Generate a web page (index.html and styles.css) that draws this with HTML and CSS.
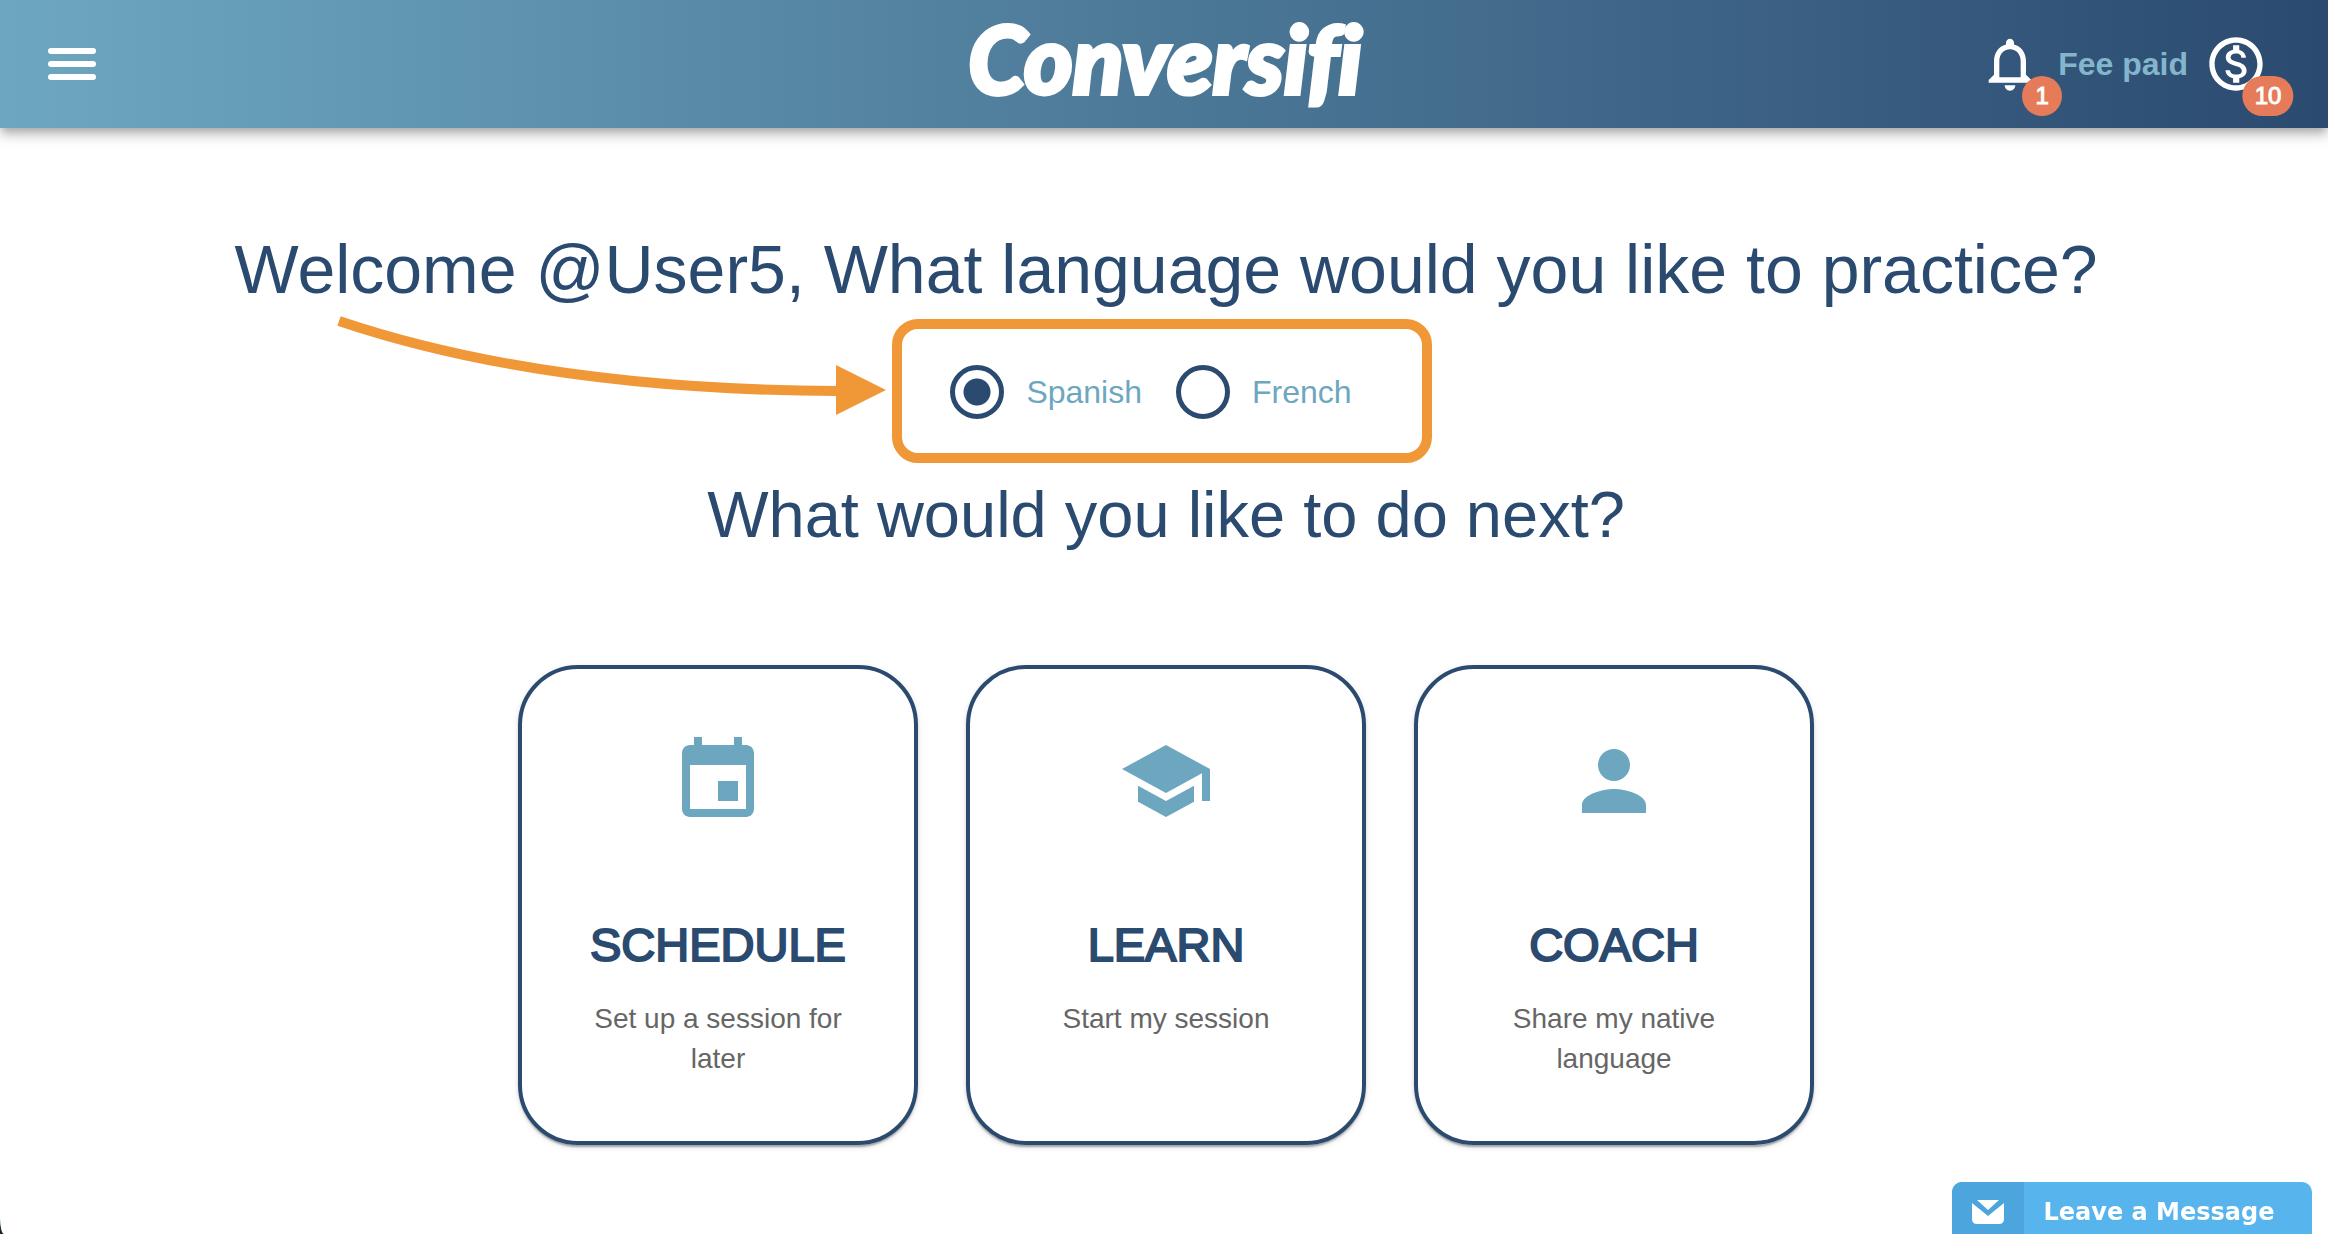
FILE: index.html
```
<!doctype html>
<html lang="en">
  <head>
    <meta charset="utf-8">
    <meta name="viewport" content="width=device-width,initial-scale=1">
    <title>Conversifi</title>
    <link rel="stylesheet" href="styles.css">
  </head>
  <body>
    <header class="topbar">
      <div class="side">
        <button class="menu" type="button" aria-label="Menu"><span></span><span></span><span></span></button>
      </div>
      <a class="logo" href="#">Conversifi</a>
      <div class="side right">
        <button class="icon-btn" type="button" aria-label="Notifications">
          <svg viewBox="0 0 24 24"><path d="M12 22c1.100 0 2-.9 2-2h-4c0 1.100.9 2 2 2zm6-6v-5c0-3.070-1.630-5.640-4.500-6.320V4c0-.83-.67-1.500-1.500-1.500s-1.500.67-1.500 1.500v.68C7.640 5.360 6 7.920 6 11v5l-2 2v1h16v-1l-2-2zm-2 1H8v-6c0-2.480 1.510-4.500 4-4.500s4 2.020 4 4.500v6z"/></svg>
          <span class="badge">1</span>
        </button>
        <span class="fee">Fee paid</span>
        <button class="icon-btn" type="button" aria-label="Credits">
          <svg viewBox="0 0 24 24"><path d="M12 2C6.480 2 2 6.480 2 12s4.480 10 10 10 10-4.480 10-10S17.520 2 12 2zm0 18c-4.410 0-8-3.590-8-8s3.590-8 8-8 8 3.590 8 8-3.590 8-8 8zm.31-8.860c-1.770-.45-2.340-.94-2.340-1.670 0-.84.79-1.430 2.100-1.430 1.380 0 1.900.66 1.940 1.640h1.710c-.05-1.340-.87-2.570-2.490-2.970V5H10.900v1.690c-1.510.32-2.720 1.300-2.720 2.810 0 1.790 1.490 2.690 3.660 3.210 1.950.46 2.340 1.150 2.340 1.870 0 .53-.39 1.390-2.100 1.390-1.600 0-2.230-.72-2.320-1.640H8.040c.1 1.700 1.360 2.660 2.860 2.970V19h2.340v-1.670c1.520-.29 2.720-1.160 2.730-2.770-.01-2.200-1.900-2.960-3.660-3.420z"/></svg>
          <span class="badge">10</span>
        </button>
      </div>
    </header>

    <main>
      <h1>Welcome @User5, What language would you like to practice?</h1>

      <div class="picker">
        <svg class="arrow" viewBox="0 0 552 112" aria-hidden="true">
          <path d="M3 9Q208 78 502 79" fill="none" stroke="#f09837" stroke-width="10"/>
          <path d="M500 53v50l50-25z" fill="#f09837"/>
        </svg>
        <fieldset aria-label="Language">
          <label><input type="radio" name="language" value="es" checked>Spanish</label>
          <label><input type="radio" name="language" value="fr">French</label>
        </fieldset>
      </div>

      <h2>What would you like to do next?</h2>

      <nav class="cards">
        <a class="card" href="#">
          <svg viewBox="0 0 24 24"><path d="M17 12h-5v5h5v-5zM16 1v2H8V1H6v2H5c-1.110 0-1.990.9-1.990 2L3 19c0 1.100.89 2 2 2h14c1.100 0 2-.9 2-2V5c0-1.100-.9-2-2-2h-1V1h-2zm3 18H5V8h14v11z"/></svg>
          <strong>SCHEDULE</strong>
          <span>Set up a session for later</span>
        </a>
        <a class="card" href="#">
          <svg viewBox="0 0 24 24"><path d="M5 13.180v4L12 21l7-3.820v-4L12 17l-7-3.820zM12 3L1 9l11 6 9-4.910V17h2V9L12 3z"/></svg>
          <strong>LEARN</strong>
          <span>Start my session</span>
        </a>
        <a class="card" href="#">
          <svg viewBox="0 0 24 24"><path d="M12 12c2.210 0 4-1.790 4-4s-1.790-4-4-4-4 1.790-4 4 1.790 4 4 4zm0 2c-2.670 0-8 1.340-8 4v2h16v-2c0-2.660-5.330-4-8-4z"/></svg>
          <strong>COACH</strong>
          <span>Share my native language</span>
        </a>
      </nav>
    </main>

    <button class="message" type="button">
      <span class="message-icon">
        <svg viewBox="0 0 32 24"><path d="M5 0h22L16 10z"/><path d="M0 3l16 13L32 3v16q0 5-5 5H5q-5 0-5-5z"/></svg>
      </span>
      <span class="message-text">Leave a Message</span>
    </button>
  </body>
</html>
```
FILE: styles.css
```
* { box-sizing: border-box; }
html { background: #0f2a35; }
body { margin: 0; min-height: 100vh; background: white; border-bottom-left-radius: 4px 16px; font-family: "Liberation Sans", Arial, sans-serif; color: #2b4a70; }
button { border: 0; padding: 0; background: none; font: inherit; color: inherit; cursor: pointer; }
a { color: inherit; text-decoration: none; }
svg { display: block; fill: currentColor; }

.topbar { display: flex; align-items: center; height: 128px; padding: 0 60px 0 48px; color: white; background: linear-gradient(90deg, #6da7bf, #2b4a70); box-shadow: 0 4px 8px -2px rgba(0,0,0,.2), 0 8px 10px rgba(0,0,0,.14), 0 2px 20px rgba(0,0,0,.12); }
.side { flex: 1; display: flex; align-items: center; gap: 16px; }
.side.right { justify-content: flex-end; }
.menu { display: flex; flex-direction: column; gap: 7px; width: 48px; }
.menu span { height: 6px; border-radius: 3px; background: white; }
.logo { padding: 0 0 12px 14px; font: italic 900 93px/104px Lato, sans-serif; font-variant-ligatures: none; -webkit-text-stroke: 4px; }
.icon-btn { position: relative; width: 64px; height: 64px; }
.badge { position: absolute; right: 0; bottom: 0; transform: translate(50%, 50%); min-width: 40px; height: 40px; padding: 0 12px; border-radius: 20px; background: #e57b59; font-size: 24px; line-height: 40px; -webkit-text-stroke: 1px; }
.fee { font-size: 32px; font-weight: bold; color: #83b6cc; }

main { display: flex; flex-direction: column; align-items: center; padding: 99px 0 88px 4px; }
h1, h2 { margin: 0; font-weight: normal; text-align: center; }
h1 { font-size: 68px; line-height: 84px; }
h2 { font-size: 65px; line-height: 80px; }

.picker { position: relative; margin: 8px 8px 12px 0; }
.arrow { position: absolute; right: 100%; top: -7px; width: 552px; height: 112px; margin-right: 4px; }
fieldset { display: flex; align-items: center; gap: 34px; margin: 0; padding: 36px 70px 34px 48px; border: 10px solid #f09837; border-radius: 26px; }
fieldset label { display: flex; align-items: center; gap: 22px; font-size: 32px; line-height: 36px; color: #6da7bf; }
fieldset input { appearance: none; width: 54px; height: 54px; margin: 0; border: 5px solid #2b4a70; border-radius: 50%; }
fieldset input:checked { background: radial-gradient(circle, #2b4a70 13px, transparent 14px); }

.cards { display: flex; flex-wrap: wrap; justify-content: center; gap: 48px; margin-top: 110px; }
.card { display: flex; flex-direction: column; align-items: center; width: 400px; min-height: 480px; padding: 64px 60px 60px; border: 4px solid #2b4a70; border-radius: 60px; text-align: center; box-shadow: 0 4px 2px -2px rgba(0,0,0,.2), 0 2px 2px rgba(0,0,0,.14), 0 2px 6px rgba(0,0,0,.12); }
.card svg { width: 96px; height: 96px; color: #6da7bf; }
.card strong { margin: 84px 0 22px; font-size: 47px; line-height: 64px; font-weight: normal; -webkit-text-stroke: 2px; }
.card span { font-size: 28px; line-height: 40px; color: #666; }

.message { position: fixed; right: 16px; bottom: 0; display: flex; width: 360px; height: 52px; overflow: hidden; border-radius: 10px 10px 0 0; background: #57b4ec; color: white; }
.message-icon { display: flex; align-items: center; justify-content: center; width: 72px; height: 52px; padding-top: 8px; background: #4ca5dc; }
.message-icon svg { width: 32px; height: 24px; }
.message-text { flex: 1; padding: 10px 18px 0 0; font: bold 24px/40px "DejaVu Sans", Verdana, sans-serif; }
```
